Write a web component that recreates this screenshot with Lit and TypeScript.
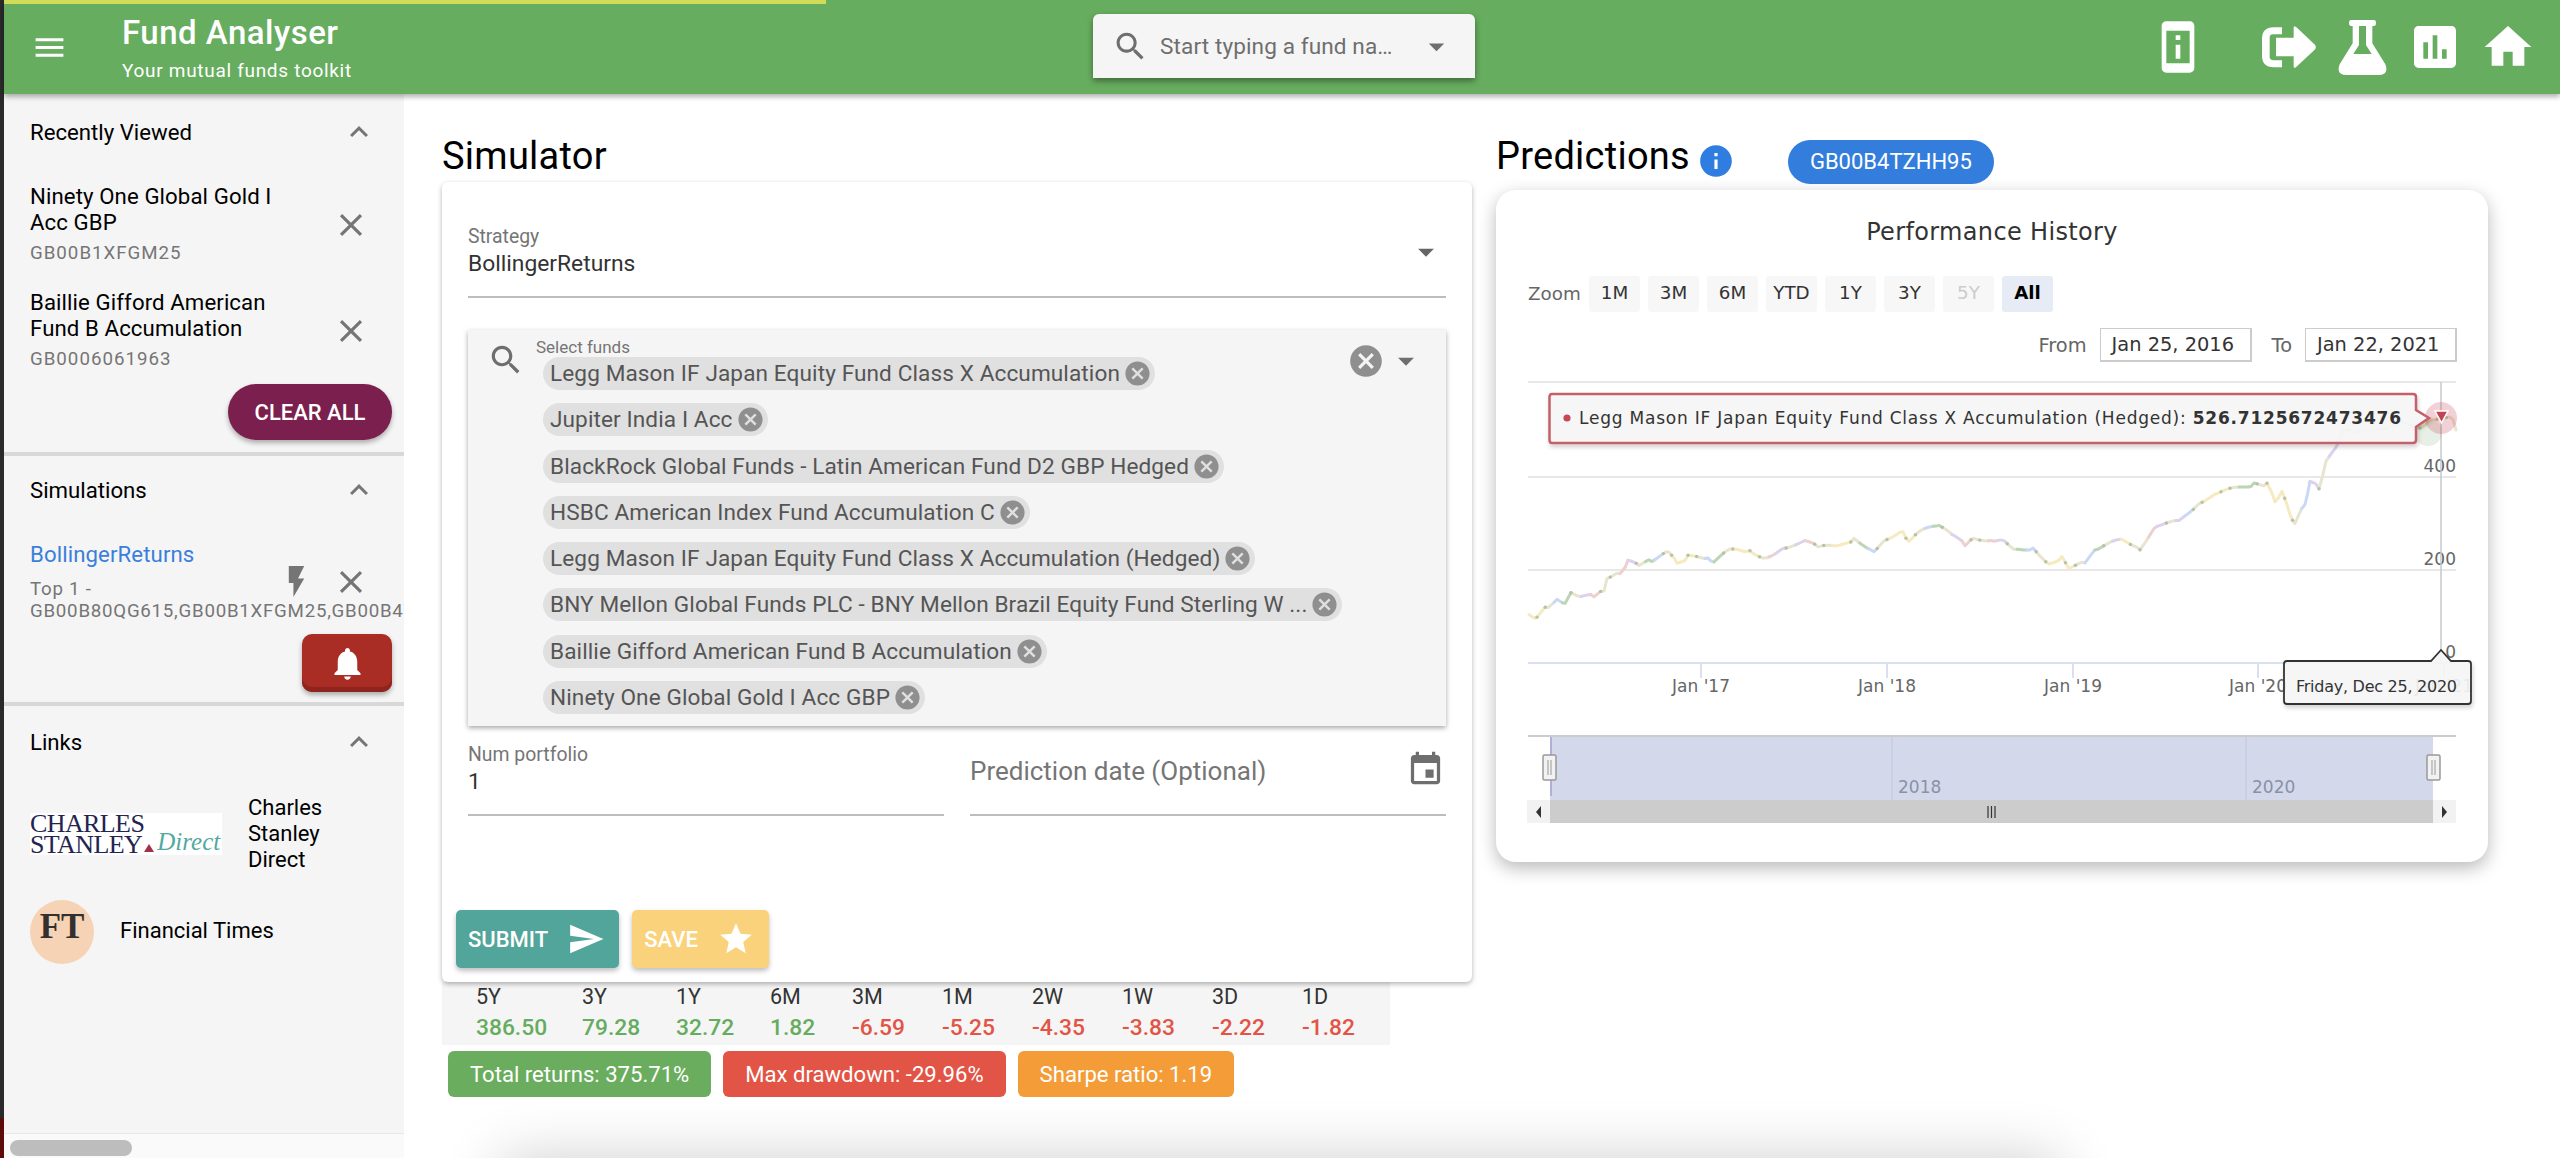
import { LitElement, html, svg, css } from 'lit';

const P = {
  menu: 'M3 18h18v-2H3v2zm0-5h18v-2H3v2zm0-7v2h18V6H3z',
  less: 'M12 8l-6 6 1.41 1.41L12 10.83l4.59 4.58L18 14z',
  close: 'M19 6.41L17.59 5 12 10.59 6.41 5 5 6.41 10.59 12 5 17.59 6.41 19 12 13.41 17.59 19 19 17.59 13.41 12z',
  search: 'M15.5 14h-.79l-.28-.27C15.41 12.59 16 11.11 16 9.5 16 5.91 13.09 3 9.5 3S3 5.91 3 9.5 5.91 16 9.5 16c1.61 0 3.09-.59 4.23-1.57l.27.28v.79l5 4.99L20.49 19l-4.99-5zm-6 0C7.01 14 5 11.99 5 9.5S7.01 5 9.5 5 14 7.01 14 9.5 11.99 14 9.5 14z',
  drop: 'M7 10l5 5 5-5z',
  phone: 'M13 7h-2v2h2V7zm0 4h-2v6h2v-6zm4-9.99L7 1c-1.1 0-2 .9-2 2v18c0 1.1.9 2 2 2h10c1.1 0 2-.9 2-2V3c0-1.1-.9-1.99-2-1.99zM17 19H7V5h10v14z',
  chart: 'M19 3H5c-1.1 0-2 .9-2 2v14c0 1.1.9 2 2 2h14c1.1 0 2-.9 2-2V5c0-1.1-.9-2-2-2zM9 17H7v-7h2v7zm4 0h-2V7h2v10zm4 0h-2v-4h2v4z',
  home: 'M10 20v-6h4v6h5v-8h3L12 3 2 12h3v8z',
  bolt: 'M7 2v11h3v9l7-12h-4l4-8z',
  bell: 'M12 22c1.1 0 2-.9 2-2h-4c0 1.1.89 2 2 2zm6-6v-5c0-3.07-1.64-5.64-4.5-6.32V4c0-.83-.67-1.5-1.5-1.5s-1.5.67-1.5 1.5v.68C7.63 5.36 6 7.92 6 11v5l-2 2v1h16v-1l-2-2z',
  cancel: 'M12 2C6.47 2 2 6.47 2 12s4.47 10 10 10 10-4.47 10-10S17.53 2 12 2zm5 13.59L15.59 17 12 13.41 8.41 17 7 15.59 10.59 12 7 8.41 8.41 7 12 10.59 15.59 7 17 8.41 13.41 12 17 15.59z',
  event: 'M17 12h-5v5h5v-5zM16 1v2H8V1H6v2H5c-1.11 0-1.99.9-1.99 2L3 19c0 1.1.89 2 2 2h14c1.1 0 2-.9 2-2V5c0-1.1-.9-2-2-2h-1V1h-2zm3 18H5V8h14v11z',
  send: 'M2.01 21L23 12 2.01 3 2 10l15 2-15 2z',
  star: 'M12 17.27L18.18 21l-1.64-7.03L22 9.24l-7.19-.61L12 2 9.19 8.63 2 9.24l5.46 4.73L5.82 21z',
  info: 'M12 2C6.48 2 2 6.48 2 12s4.48 10 10 10 10-4.48 10-10S17.52 2 12 2zm1 15h-2v-6h2v6zm0-8h-2V7h2v2z',
};

const icon = (d: string, cls = '') =>
  html`<svg class=${cls} viewBox="0 0 24 24" fill="currentColor"><path d=${d}></path></svg>`;

const FUNDS = [
  'Legg Mason IF Japan Equity Fund Class X Accumulation',
  'Jupiter India I Acc',
  'BlackRock Global Funds - Latin American Fund D2 GBP Hedged',
  'HSBC American Index Fund Accumulation C',
  'Legg Mason IF Japan Equity Fund Class X Accumulation (Hedged)',
  'BNY Mellon Global Funds PLC - BNY Mellon Brazil Equity Fund Sterling W ...',
  'Baillie Gifford American Fund B Accumulation',
  'Ninety One Global Gold I Acc GBP',
];

const RETURNS: Array<[string, string]> = [
  ['5Y', '386.50'], ['3Y', '79.28'], ['1Y', '32.72'], ['6M', '1.82'], ['3M', '-6.59'],
  ['1M', '-5.25'], ['2W', '-4.35'], ['1W', '-3.83'], ['3D', '-2.22'], ['1D', '-1.82'],
];

// traced from the price line, in page pixels
const LINE: Array<[number, number]> = [
  [1529, 614], [1537, 618], [1548, 606], [1557, 600], [1565, 603], [1571, 594], [1581, 597], [1594, 596],
  [1604, 590], [1607, 577], [1620, 572], [1628, 562], [1639, 565], [1652, 560], [1669, 552], [1677, 563],
  [1688, 557], [1708, 557], [1714, 562], [1730, 550], [1747, 553], [1753, 552], [1766, 558], [1783, 547],
  [1805, 542], [1818, 547], [1838, 547], [1854, 539], [1874, 550], [1887, 538], [1903, 530], [1909, 543],
  [1922, 530], [1939, 527], [1952, 535], [1965, 545], [1974, 538], [1994, 540], [2004, 540], [2017, 550],
  [2033, 548], [2049, 563], [2062, 557], [2069, 568], [2085, 563], [2098, 548], [2124, 539], [2140, 548],
  [2157, 525], [2179, 522], [2199, 502], [2218, 493], [2254, 484], [2267, 485], [2275, 500], [2282, 493],
  [2290, 513], [2295, 525], [2305, 503], [2310, 483], [2319, 487], [2326, 463], [2339, 443], [2343, 430],
  [2373, 430], [2400, 423], [2420, 427], [2428, 422], [2443, 420], [2453, 418], [2456, 430],
];

const PALETTE = ['#f6ebc0', '#ecd0d0', '#c9d9f5', '#bcd6b5', '#dcd2ee', '#f6ebc0', '#e9e4d0'];

function priceSegments() {
  const pts: Array<[number, number]> = [];
  LINE.forEach(([x, y], i) => {
    const next = LINE[i + 1];
    if (!next) { pts.push([x, y]); return; }
    const steps = Math.max(1, Math.round((next[0] - x) / 3));
    for (let s = 0; s < steps; s++) {
      const t = s / steps;
      const wob = Math.sin((x + s) * 12.9898) * 1.8;
      pts.push([x + (next[0] - x) * t, y + (next[1] - y) * t + wob]);
    }
  });
  const out = [];
  for (let i = 0; i < pts.length - 1; i += 3) {
    const run = pts.slice(i, i + 4);
    const r = Math.abs(Math.sin(i * 78.233));
    out.push({
      d: 'M' + run.map((p) => p[0].toFixed(1) + ' ' + p[1].toFixed(1)).join('L'),
      c: PALETTE[Math.floor(r * PALETTE.length)],
      dot: r > 0.72 ? run[0] : null,
    });
  }
  return out;
}

class PerfChart extends LitElement {
  static styles = css`
    :host { display: block; font-family: 'DejaVu Sans', sans-serif; }
    .title { text-align: center; font-size: 24px; letter-spacing: 0.35px; line-height: 32px; color: #333; }
    .zoom { display: flex; align-items: center; margin: 28px 0 0 32px; height: 36px; font-size: 18.3px; color: #666; }
    .zoom span { width: 61px; padding-bottom: 2px; }
    .zoom button {
      width: 51px; height: 36px; margin-right: 8px; padding: 0 0 3px; border: 0; border-radius: 3px;
      background: #f7f7f7; font: inherit; color: #333;
    }
    .zoom button.off { color: #ccc; }
    .zoom button.on { background: #e6ebf5; color: #000; font-weight: 700; }
    .range { display: flex; justify-content: flex-end; align-items: center; margin: 16px 31px 0 0; height: 34px; font-size: 19.4px; color: #666; }
    .range div {
      width: 152px; height: 34px; box-sizing: border-box; margin-left: 13px; padding-left: 11px;
      border: 2px solid #ccc; border-width: 1px 2px 2px 1px; color: #333; line-height: 31px; font-size: 19.4px;
    }
    .range .to { margin-left: 20px; }
    svg { display: block; margin-top: 13px; width: 992px; height: 465px; }
    text { font-family: 'DejaVu Sans', sans-serif; font-size: 17px; fill: #666; }
    .tip { font-size: 17px; fill: #333; }
    .tipdate { font-size: 16px; fill: #333; }
    .nav { fill: #8a90a8; }
    .ylab { text-anchor: end; }
    .xlab { text-anchor: middle; }
  `;

  render() {
    const grid = [[477, '400'], [570, '200'], [663, '0']] as Array<[number, string]>;
    const ticks = [[1701, "Jan '17"], [1887, "Jan '18"], [2073, "Jan '19"], [2258, "Jan '20"], [2444, "Jan '21"]] as Array<[number, string]>;
    return html`
      <div class="title">Performance History</div>
      <div class="zoom">
        <span>Zoom</span>
        ${['1M', '3M', '6M', 'YTD', '1Y', '3Y'].map((b) => html`<button>${b}</button>`)}
        <button class="off">5Y</button>
        <button class="on">All</button>
      </div>
      <div class="range">
        <span>From</span><div>Jan 25, 2016</div>
        <span class="to">To</span><div>Jan 22, 2021</div>
      </div>
      <svg viewBox="1496 375 992 465">
        <defs>
          <filter id="soft" x="-5%" y="-20%" width="110%" height="150%">
            <feDropShadow dx="1" dy="3" stdDeviation="2" flood-opacity="0.18"></feDropShadow>
          </filter>
        </defs>
        <path d="M1528 382H2456" stroke="#e8e8e8" stroke-width="2"></path>
        ${grid.slice(0, 2).map(([y]) => svg`<path d="M1528 ${y}H2456" stroke="#e8e8e8" stroke-width="2"></path>`)}
        <path d="M1528 663H2456" stroke="#ccd6eb" stroke-width="1.5"></path>
        ${ticks.map(([x]) => svg`<path d="M${x} 664V678" stroke="#ccd6eb" stroke-width="1.5"></path>`)}
        ${grid.map(([y, t]) => svg`<text class="ylab" x="2456" y=${y - 5}>${t}</text>`)}
        ${ticks.map(([x, t]) => svg`<text class="xlab" x=${x} y="692">${t}</text>`)}

        ${priceSegments().map((s) => svg`
          <path d=${s.d} fill="none" stroke=${s.c} stroke-width="3" stroke-linejoin="round" stroke-linecap="round"></path>
          ${s.dot ? svg`<circle cx=${s.dot[0]} cy=${s.dot[1]} r="1.7" fill="#9db597" opacity="0.7"></circle>` : null}`)}

        <path d="M2441 382V663" stroke="#c8c8c8" stroke-width="1.5"></path>
        <circle cx="2428" cy="432" r="14" fill="#7fa877" opacity="0.18"></circle>
        <circle cx="2441" cy="418" r="16" fill="#c8485a" opacity="0.25"></circle>
        <path d="M2435 411H2448L2441.5 423Z" fill="#c24355" stroke="#fff" stroke-width="1.5"></path>

        <path filter="url(#soft)" d="M1552 394H2413Q2416 394 2416 397V410L2429 418L2416 427V440Q2416 443 2413 443H1552Q1549.5 443 1549.5 440V397Q1549.5 394 1552 394Z" fill="#f7f7f7" fill-opacity="0.93" stroke="#c4606a" stroke-width="2.5"></path>
        <circle cx="1567" cy="418" r="3.6" fill="#c4485a"></circle>
        <text class="tip" x="1579" y="424" textLength="822">Legg Mason IF Japan Equity Fund Class X Accumulation (Hedged): <tspan font-weight="700">526.7125672473476</tspan></text>

        <path filter="url(#soft)" d="M2287 661H2431L2441 650L2451 661H2468Q2471 661 2471 664V701Q2471 704 2468 704H2287Q2284 704 2284 701V664Q2284 661 2287 661Z" fill="#f7f7f7" fill-opacity="0.9" stroke="#333" stroke-width="1.8"></path>
        <text class="tipdate" x="2296" y="692" textLength="161">Friday, Dec 25, 2020</text>

        <path d="M1528 736H2456" stroke="#ccc" stroke-width="2"></path>
        <rect x="1550" y="737" width="883" height="63" fill="#d3d9ea"></rect>
        <path d="M1551 737V796" stroke="#8d86c4" stroke-width="1"></path>
        <path d="M1892 737V800M2246 737V800" stroke="#c3cade" stroke-width="1.2"></path>
        <text class="nav" x="1898" y="793">2018</text>
        <text class="nav" x="2252" y="793">2020</text>
        ${[1543, 2427].map((x) => svg`
          <rect x=${x} y="755" width="13" height="25" rx="1.5" fill="#f2f2f2" stroke="#999" stroke-width="1.5"></rect>
          <path d="M${x + 5} 760V775M${x + 8} 760V775" stroke="#999" stroke-width="1"></path>`)}
        <rect x="1527" y="800" width="929" height="23" fill="#f2f2f2"></rect>
        <rect x="1550" y="800" width="883" height="23" fill="#ccc"></rect>
        <path d="M1988 806V818M1991.5 806V818M1995 806V818" stroke="#333" stroke-width="1.2"></path>
        <path d="M1541 806L1536 812L1541 818Z M2442 806L2447 812L2442 818Z" fill="#333"></path>
      </svg>
    `;
  }
}
customElements.define('perf-chart', PerfChart);

class AppRoot extends LitElement {
  static styles = css`
    :host {
      display: block; width: 2560px; height: 1158px; overflow: hidden; position: relative;
      background: #fff; font-family: Roboto, sans-serif; color: #000;
    }
    svg { display: block; flex: none; }
    .shell {
      height: 100%; display: flex; flex-direction: column; box-sizing: border-box;
      border-left: 4px solid #2a2a2a;
    }
    .redmark { position: absolute; left: 0; top: 1118px; width: 4px; height: 40px; background: #5c0a0a; }

    header {
      position: relative; z-index: 3; flex: none; height: 94px; background: #67ad5f; color: #fff;
      display: grid; grid-template-columns: 1089px 382px 1fr; box-shadow: 0 3px 5px rgba(0, 0, 0, 0.3);
    }
    .progress { position: absolute; left: 0; top: 0; height: 3.5px; width: 822px; background: #d2db58; }
    .brand { display: flex; }
    .menu { width: 37px; height: 37px; margin: 29px 54px 0 27px; }
    .brand h1 { margin: 13px 0 0; font-size: 33px; font-weight: 500; line-height: 40px; letter-spacing: 0.5px; }
    .brand p { margin: 6px 0 0; font-size: 19px; line-height: 24px; letter-spacing: 0.7px; }
    .search {
      align-self: start; margin-top: 14px; height: 64px; background: #f5f5f5; border-radius: 6px 6px 0 0;
      display: flex; align-items: center; color: #6e6e6e; font-size: 22.6px; letter-spacing: 0.1px;
      box-shadow: 0 3px 6px rgba(0, 0, 0, 0.4);
    }
    .search .glass { width: 37px; height: 37px; margin-left: 19px; }
    .search span { margin-left: 11px; width: 258px; white-space: nowrap; }
    .search .arrow { width: 37px; height: 37px; }
    .actions { display: flex; align-items: center; justify-content: flex-end; padding-right: 24px; }
    .actions svg { width: 56px; height: 56px; }
    .actions .exit { width: 54px; height: 42px; margin: 0 22px 0 56px; }
    .actions .flask { width: 49px; height: 55px; margin-right: 20px; }
    .actions .bars { margin-right: 17px; }

    .body { flex: 1; min-height: 0; display: flex; }

    aside {
      flex: none; width: 400px; background: #f5f5f5; overflow: hidden;
      display: flex; flex-direction: column;
    }
    section { padding: 0 34px 0 26px; border-bottom: 4px solid #d8d8d8; }
    section.recent { padding-top: 2px; padding-bottom: 12px; }
    section.sims { padding-bottom: 10px; }
    section.links { padding-top: 0; border-bottom: 0; }
    .head { height: 72px; display: flex; align-items: center; justify-content: space-between; font-size: 22.2px; }
    section.sims .head { margin-top: -2px; }
    .head svg { width: 36px; height: 36px; margin-right: -7px; color: #757575; }
    .item { display: flex; align-items: center; font-size: 22.2px; letter-spacing: 0.1px; line-height: 26px; margin-top: 15px; }
    .item + .item { margin-top: 23px; }
    .item .text { flex: none; width: 302px; padding-right: 32px; box-sizing: border-box; }
    .item .text small { display: block; margin-top: 5px; font-size: 18.7px; letter-spacing: 1px; color: #757575; }
    .item svg { width: 38px; height: 38px; color: #757575; }
    .sim .text { width: 248px; padding: 0; }
    .sim a { color: #3a7fdc; display: block; }
    .sim .text small { line-height: 22px; margin-top: 11px; letter-spacing: 0.75px; }
    .sim .bolt { width: 37px; height: 37px; margin-right: 16.5px; }
    .right { display: flex; justify-content: flex-end; margin: 12px -22px 0 0; }
    .clear {
      width: 164px; height: 56px; border: 0; border-radius: 28px; background: #7b1f4e; color: #fff;
      font: 500 22px Roboto, sans-serif; box-shadow: 0 3px 5px rgba(0, 0, 0, 0.3);
    }
    .alert {
      width: 90px; height: 58px; border: 0; border-radius: 10px; background: #a92d25; color: #fff; padding: 0;
      display: flex; align-items: center; justify-content: center;
      box-shadow: inset 0 -5px 0 #8e241d, 0 3px 5px rgba(0, 0, 0, 0.3);
    }
    .alert svg { width: 39px; height: 39px; }
    .link { display: flex; align-items: center; gap: 26px; font-size: 22px; line-height: 26px; margin-top: 17px; }
    .link + .link { margin-top: 27px; }
    .link .ft + div { margin-top: -3px; }
    .cs {
      flex: none; width: 192px; height: 42px; background: #fff; display: flex; align-items: flex-end;
      font-family: 'Liberation Serif', serif; color: #24244f;
    }
    .cs .name { font-size: 26px; line-height: 21px; letter-spacing: -0.6px; }
    .cs i { width: 0; height: 0; margin: 0 3px 3px 0; border: 5px solid transparent; border-top: 0; border-bottom: 8px solid #a32f4a; }
    .cs em { font-size: 25px; line-height: 26px; color: #52a9a0; }
    .ft {
      flex: none; width: 64px; height: 64px; border-radius: 50%; background: #f6d3b5; color: #33302e;
      font: 700 35px/54px 'Liberation Serif', serif; text-align: center;
    }
    .scroll { margin-top: auto; flex: none; height: 25px; background: #fafafa; border-top: 1px solid #e8e8e8; box-sizing: border-box; padding: 6px 0 0 6px; }
    .scroll div { width: 122px; height: 16px; border-radius: 8px; background: #bdbdbd; }

    main {
      flex: 1; min-width: 0; overflow: hidden; box-sizing: border-box; padding: 36px 0 0 38px;
      display: grid; grid-template-columns: 1030px 992px; column-gap: 24px; align-content: start;
    }
    h2 { margin: 0; font-size: 38px; font-weight: 400; line-height: 52px; letter-spacing: 0.25px; }
    .card { position: relative; z-index: 1; background: #fff; border-radius: 6px; padding: 42px 26px 14px; box-shadow: 0 2px 5px rgba(0, 0, 0, 0.3); }
    .label { font-size: 19.4px; line-height: 26px; color: #757575; }
    .value { font-size: 22.8px; line-height: 28px; color: #333; }
    .field { border-bottom: 2px solid #bdbdbd; padding-bottom: 18px; position: relative; }
    .field .arrow { position: absolute; right: 1px; top: 9px; width: 38px; height: 38px; color: #666; }
    .funds {
      margin-top: 32px; height: 396px; box-sizing: border-box; background: #f5f5f5;
      box-shadow: 0 2px 5px rgba(0, 0, 0, 0.35); display: flex; padding: 0 21px 0 19px;
    }
    .funds .glass { width: 38px; height: 38px; margin-top: 11px; color: #6e6e6e; }
    .funds .mid { flex: 1; padding: 7px 0 0 11px; }
    .funds .small { font-size: 17px; line-height: 20px; color: #757575; }
    .chips { display: flex; flex-direction: column; align-items: flex-start; gap: 13.3px; margin: 0 0 0 7px; }
    .chip {
      height: 33px; display: flex; align-items: center; border-radius: 17px; background: #e0e0e0; padding: 0 3px 0 7px;
      font-size: 22.6px; letter-spacing: 0.1px; color: #555; white-space: nowrap;
    }
    .chip svg { width: 29px; height: 29px; margin-left: 3px; color: #8f8f8f; }
    .funds .end { display: flex; margin-top: 12px; color: #6e6e6e; }
    .funds .end svg { width: 38px; height: 38px; }
    .funds .end svg:first-child { color: #8f8f8f; margin-right: 2px; }
    .pair { display: grid; grid-template-columns: 476px 476px; column-gap: 26px; margin-top: 16px; }
    .date { display: flex; justify-content: space-between; height: 52px; padding: 13px 0 7px; font-size: 26px; line-height: 32px; color: #757575; }
    .date svg { width: 39px; height: 39px; margin: -5px 1px 0 0; color: #6e6e6e; }
    .buttons { display: flex; gap: 13px; margin: 94px 0 0 -12px; }
    .buttons button {
      height: 58px; border: 0; border-radius: 5px; color: #fff; display: flex; align-items: center; gap: 19px; padding: 0 14px 0 12px;
      font: 500 22px Roboto, sans-serif; box-shadow: 0 3px 5px rgba(0, 0, 0, 0.25);
    }
    .buttons svg { width: 38px; height: 38px; }
    .submit { background: #52a59a; }
    .save { background: #fad27c; }

    .returns {
      width: 948px; height: 63px; box-sizing: border-box; background: #f5f5f5; padding-left: 34px; color: #333;
      display: grid; grid-template-columns: 106px 94px 94px 82px 90px 90px 90px 90px 90px 90px; font-size: 21.5px;
    }
    .returns div { line-height: 30px; padding-top: 0; }
    .returns b { display: block; font-size: 22.8px; font-weight: 500; line-height: 31px; }
    .pos { color: #66ac5e; }
    .neg { color: #e25445; }
    .badges { display: flex; gap: 12px; margin: 6px 0 0 6px; }
    .badges span { height: 46px; line-height: 46px; padding: 0 22px; border-radius: 6px; color: #fff; font-size: 22.1px; }
    .b-green { background: #6aad5e; }
    .b-red { background: #e25445; }
    .b-orange { background: #f39c38; }

    .pred { height: 60px; display: flex; align-items: flex-start; }
    .pred svg { width: 38px; height: 38px; margin: 12px 0 0 7px; color: #2f7de1; }
    .pred span {
      margin: 10px 0 0 53px; height: 44px; line-height: 44px; padding: 0 22px; border-radius: 22px;
      background: #337ddd; color: #fff; font-size: 22px;
    }
    .chartcard {
      height: 672px; box-sizing: border-box; padding-top: 26px; background: #fff; border-radius: 20px;
      box-shadow: 0 6px 18px rgba(0, 0, 0, 0.28);
    }
    .below {
      grid-column: 1 / 3; width: 1560px; height: 200px; margin: 62px 0 0 58px; border-radius: 12px;
      box-shadow: 0 0 60px rgba(0, 0, 0, 0.2);
    }
  `;

  render() {
    return html`
      <div class="redmark"></div>
      <div class="shell">
        <header>
          <div class="progress"></div>
          <div class="brand">
            ${icon(P.menu, 'menu')}
            <div>
              <h1>Fund Analyser</h1>
              <p>Your mutual funds toolkit</p>
            </div>
          </div>
          <div class="search">
            ${icon(P.search, 'glass')}
            <span>Start typing a fund na…</span>
            ${icon(P.drop, 'arrow')}
          </div>
          <div class="actions">
            ${icon(P.phone)}
            <svg class="exit" viewBox="395 80 162 125" fill="currentColor">
              <path d="M455 83H430Q395 83 395 118V168Q395 203 430 203H455V182H428Q418 182 418 172V114Q418 104 428 104H455Z"></path>
              <path d="M437 115H490V85Q490 75 500 85L553 135Q560 143 553 151L500 200Q490 210 490 200V170H437Z"></path>
            </svg>
            <svg class="flask" viewBox="625 60 145 165" fill="currentColor" fill-rule="evenodd">
              <path d="M663 60H732Q738 60 738 69T732 78H727V130L766 193Q778 225 745 225H650Q617 225 629 193L668 130V78H663Q657 78 657 69T663 60ZM687 78V135L670 162H725L708 135V78Z"></path>
            </svg>
            ${icon(P.chart, 'bars')}
            ${icon(P.home)}
          </div>
        </header>
        <div class="body">
          <aside>
            <section class="recent">
              <div class="head">Recently Viewed ${icon(P.less)}</div>
              <div class="item">
                <div class="text">Ninety One Global Gold I Acc GBP<small>GB00B1XFGM25</small></div>
                ${icon(P.close)}
              </div>
              <div class="item">
                <div class="text">Baillie Gifford American Fund B Accumulation<small>GB0006061963</small></div>
                ${icon(P.close)}
              </div>
              <div class="right"><button class="clear">CLEAR ALL</button></div>
            </section>
            <section class="sims">
              <div class="head">Simulations ${icon(P.less)}</div>
              <div class="item sim">
                <div class="text">
                  <a>BollingerReturns</a>
                  <small>Top 1 - GB00B80QG615,GB00B1XFGM25,GB00B4TZHH95,GB0006061963</small>
                </div>
                ${icon(P.bolt, 'bolt')}
                ${icon(P.close)}
              </div>
              <div class="right"><button class="alert">${icon(P.bell)}</button></div>
            </section>
            <section class="links">
              <div class="head">Links ${icon(P.less)}</div>
              <div class="link">
                <div class="cs">
                  <div class="name">CHARLES<br />STANLEY</div>
                  <i></i>
                  <em>Direct</em>
                </div>
                <div>Charles Stanley Direct</div>
              </div>
              <div class="link">
                <div class="ft">FT</div>
                <div>Financial Times</div>
              </div>
            </section>
            <div class="scroll"><div></div></div>
          </aside>
          <main>
            <div>
              <h2>Simulator</h2>
              <div class="card">
                <div class="field">
                  <div class="label">Strategy</div>
                  <div class="value">BollingerReturns</div>
                  ${icon(P.drop, 'arrow')}
                </div>
                <div class="funds">
                  ${icon(P.search, 'glass')}
                  <div class="mid">
                    <div class="small">Select funds</div>
                    <div class="chips">
                      ${FUNDS.map((f) => html`<div class="chip">${f}${icon(P.cancel)}</div>`)}
                    </div>
                  </div>
                  <div class="end">${icon(P.cancel)}${icon(P.drop)}</div>
                </div>
                <div class="pair">
                  <div class="field">
                    <div class="label">Num portfolio</div>
                    <div class="value">1</div>
                  </div>
                  <div class="field date">
                    <span>Prediction date (Optional)</span>
                    ${icon(P.event)}
                  </div>
                </div>
                <div class="buttons">
                  <button class="submit">SUBMIT ${icon(P.send)}</button>
                  <button class="save">SAVE ${icon(P.star)}</button>
                </div>
              </div>
              <div class="returns">
                ${RETURNS.map(([k, v]) => html`<div>${k}<b class=${v.startsWith('-') ? 'neg' : 'pos'}>${v}</b></div>`)}
              </div>
              <div class="badges">
                <span class="b-green">Total returns: 375.71%</span>
                <span class="b-red">Max drawdown: -29.96%</span>
                <span class="b-orange">Sharpe ratio: 1.19</span>
              </div>
            </div>
            <div>
              <div class="pred">
                <h2>Predictions</h2>
                ${icon(P.info)}
                <span>GB00B4TZHH95</span>
              </div>
              <div class="chartcard"><perf-chart></perf-chart></div>
            </div>
            <div class="below"></div>
          </main>
        </div>
      </div>
    `;
  }
}
customElements.define('app-root', AppRoot);
